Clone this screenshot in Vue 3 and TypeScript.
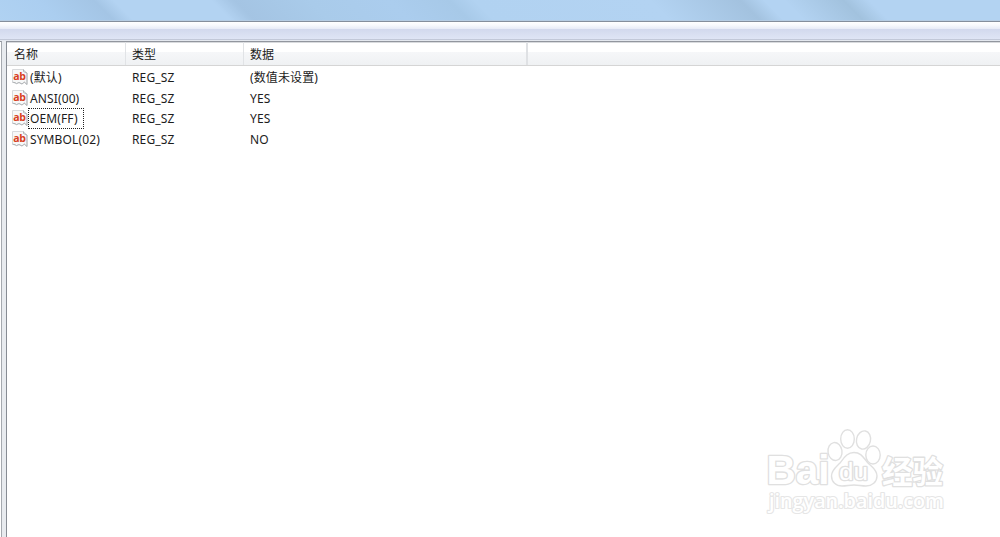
<template>
  <div class="window">
    <div class="title-bar"></div>
    <div class="menu-bar"></div>
    <div class="content">
      <div class="tree-pane"></div>
      <div class="splitter"></div>
      <div class="list-pane">
        <div class="list-header">
          <div v-for="col in columns" :key="col" class="header-cell">{{ col }}</div>
          <div class="header-rest"></div>
        </div>
        <div class="list-body">
          <div v-for="row in rows" :key="row.name" class="row">
            <div class="cell cell-name">
              <svg class="value-icon" width="17" height="17" viewBox="0 0 17 17">
                <path
                  d="M0.500 0.500H11.500L15 4V15.500L12 12.800L10 15L7 13.500L4.500 14.600L0.500 13.200Z"
                  fill="#f7f8f8"
                  stroke="#d8dadc"
                />
                <path
                  d="M11.500 0.500V2.500L15 4V15.500L12 12.800M0.500 13.200L3 13.600L4.500 14.600L7 13.500L10 15L12 13.500"
                  fill="none"
                  stroke="#b0b3b6"
                />
                <text x="1.200" y="10.500">ab</text>
              </svg>
              <span class="value-name" :class="{ focused: row.name === focusedName }">{{ row.name }}</span>
            </div>
            <div class="cell">{{ row.type }}</div>
            <div class="cell">{{ row.data }}</div>
          </div>
        </div>
      </div>
    </div>

    <svg class="watermark" width="210" height="105" viewBox="0 0 210 105">
      <g class="outline">
        <text x="16.500" y="64" class="brand" textLength="63" lengthAdjust="spacingAndGlyphs">Bai</text>
        <ellipse cx="85" cy="31.5" rx="7" ry="9" transform="rotate(-8 85 31.5)" />
        <ellipse cx="97.5" cy="19" rx="6.8" ry="9.3" />
        <ellipse cx="113.5" cy="20" rx="7" ry="9.2" transform="rotate(12 113.5 20)" />
        <ellipse cx="123" cy="35" rx="7.2" ry="9" />
        <path
          d="M104 32.500C97 32.500 94 38 90 43C86 47 81.500 50 81.500 56C81.500 62 86 66 92 66C97 66 99 65 104 65C109 65 111 66 116 66C122 66 127 62 127 56C127 50 122 47 118 43C113 37 111 32.500 104 32.500Z"
        />
        <text x="89" y="60" class="du" textLength="29" lengthAdjust="spacingAndGlyphs">du</text>
        <text x="132" y="62.500" class="section" textLength="61" lengthAdjust="spacingAndGlyphs">经验</text>
        <text x="19" y="88" class="site" textLength="175" lengthAdjust="spacingAndGlyphs">jingyan.baidu.com</text>
      </g>
    </svg>
  </div>
</template>

<script setup lang="ts">
import { ref } from 'vue'

interface RegistryValue {
  name: string
  type: string
  data: string
}

const columns = ['名称', '类型', '数据']

const rows: RegistryValue[] = [
  { name: '(默认)', type: 'REG_SZ', data: '(数值未设置)' },
  { name: 'ANSI(00)', type: 'REG_SZ', data: 'YES' },
  { name: 'OEM(FF)', type: 'REG_SZ', data: 'YES' },
  { name: 'SYMBOL(02)', type: 'REG_SZ', data: 'NO' }
]

const focusedName = ref('OEM(FF)')
</script>

<style>
body {
  margin: 0;
  overflow: hidden;
}
</style>

<style scoped>
.window {
  position: relative;
  display: flex;
  flex-direction: column;
  width: 100%;
  height: 100vh;
  overflow: hidden;
  background: #fff;
  color: #1c1c1c;
  font-family: 'Noto Sans', 'Noto Sans CJK SC', sans-serif;
  font-size: 12px;
}

.title-bar {
  box-sizing: border-box;
  height: 22px;
  flex-shrink: 0;
  border-bottom: 1px solid #858f9c;
  box-shadow: inset 0 -1px #b6cde3;
  background: linear-gradient(
    45deg,
    #b0d2f2 0,
    #abcef0 42px,
    #a4c5e5 81px,
    #b3d3f2 95px,
    #b3d3f2 164px,
    #a4c4e3 180px,
    #a9cbea 233px,
    #abcdee 290px,
    #a7c9e8 332px,
    #b1d2f1 350px,
    #b3d3f2 474px,
    #a3c2df 538px,
    #b3d3f2 555px,
    #b3d3f2 569px,
    #a2c2de 611px,
    #b3d3f2 629px,
    #b3d3f2 100%
  );
}

.menu-bar {
  box-sizing: border-box;
  height: 19px;
  flex-shrink: 0;
  border-bottom: 1px solid #e4e8ef;
  box-shadow: inset 0 -1px #c2c8d8;
  background: linear-gradient(#fff 0, #f8fafd 3px, #e7ebf7 7px, #d2d9ed 7px, #dfe5f5 17px);
}

.content {
  display: flex;
  flex: 1;
  min-height: 0;
}

.tree-pane {
  box-sizing: border-box;
  width: 2px;
  border-top: 1px solid #92969e;
  border-right: 1px solid #a5a9af;
  background: #fff;
}

.splitter {
  width: 4px;
  background: #e8ebef;
}

.list-pane {
  box-sizing: border-box;
  flex: 1;
  border-top: 1px solid #92969e;
  border-left: 1px solid #878c94;
  box-shadow: inset 0 1px #d9dbde;
}

.list-header {
  box-sizing: border-box;
  display: grid;
  grid-template-columns: 119px 118px 284px 1fr;
  grid-template-rows: 100%;
  height: 24px;
  border-bottom: 1px solid #d5d5d5;
  background: linear-gradient(transparent 1px, #fff 1px, #fff 10px, #f6f7f9 10px, #eff1f3 100%);
}

.header-cell {
  box-sizing: border-box;
  padding-left: 6px;
  border-right: 1px solid #e1e3e6;
  line-height: 25px;
}

.header-cell:first-child {
  padding-left: 7px;
}

.header-cell:nth-child(3) {
  border-right: 2px solid #dfe1e4;
}

.list-body {
  padding-top: 1px;
}

.row {
  display: grid;
  grid-template-columns: 118px 118px 1fr;
  height: 20.7px;
}

.cell {
  padding-left: 7px;
  line-height: 22px;
  letter-spacing: 0.12px;
  white-space: nowrap;
}

.cell-name {
  display: flex;
  align-items: flex-start;
  padding-left: 5px;
}

.value-icon {
  flex-shrink: 0;
  margin-top: 2px;
}

.value-icon text {
  fill: #d8401f;
  font-family: 'Open Sans', sans-serif;
  font-size: 10.5px;
  font-weight: 700;
  letter-spacing: -0.2px;
}

.value-name {
  box-sizing: border-box;
  height: 21px;
  margin-left: -1px;
  padding: 0 5px 0 1px;
  border: 1px dotted transparent;
  line-height: 20px;
}

.value-name.focused {
  border-color: #222;
}

.watermark {
  position: absolute;
  top: 420px;
  left: 750px;
}

.outline {
  fill: #fff;
  stroke: #e0e0e0;
  stroke-width: 1.4;
  stroke-linejoin: round;
}

.outline text {
  paint-order: stroke;
  stroke-width: 2.6;
}

.brand {
  font-family: 'Liberation Sans', sans-serif;
  font-size: 40px;
  font-weight: 700;
}

.du {
  font-family: 'Liberation Sans', sans-serif;
  font-size: 23px;
  font-weight: 400;
}

.section {
  font-family: 'Noto Sans CJK SC', sans-serif;
  font-size: 31px;
  font-weight: 700;
}

.outline .site {
  font-family: 'Open Sans', sans-serif;
  font-size: 19px;
  font-weight: 600;
  stroke: #e6e6e6;
  stroke-width: 2.2;
}
</style>
